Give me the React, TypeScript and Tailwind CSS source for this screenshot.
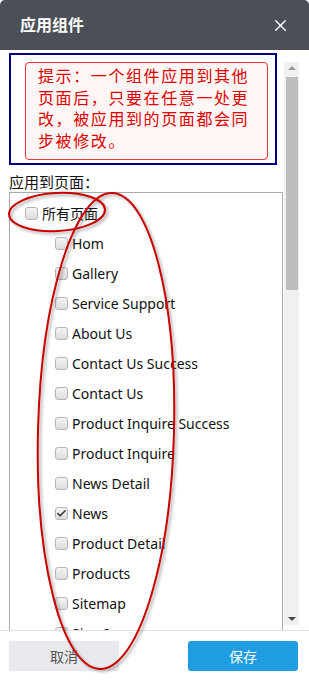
import { Check, X } from "lucide-react";

const pages = [
  { name: "Hom" },
  { name: "Gallery" },
  { name: "Service Support" },
  { name: "About Us" },
  { name: "Contact Us Success" },
  { name: "Contact Us" },
  { name: "Product Inquire Success" },
  { name: "Product Inquire" },
  { name: "News Detail" },
  { name: "News", checked: true },
  { name: "Product Detail" },
  { name: "Products" },
  { name: "Sitemap" },
  { name: "Sign In" },
];

function Box({ checked }: { checked?: boolean }) {
  return (
    <span className="flex h-[13px] w-[13px] shrink-0 items-center justify-center rounded-[3px] border border-[#b5b5b5] bg-gradient-to-b from-[#f4f4f4] to-[#dcdcdc]">
      {checked && <Check size={11} strokeWidth={3.5} className="text-[#333]" />}
    </span>
  );
}

export default function App() {
  return (
    <div className="relative h-[683px] w-[309px] overflow-hidden rounded-[5px] bg-white font-['Noto_Sans','Noto_Sans_CJK_SC',sans-serif]">
      <div className="flex h-[50px] items-center justify-between bg-[#4b4f57] pl-[20px] pr-[19px]">
        <span className="text-[16px] font-bold text-white">应用组件</span>
        <X size={19} strokeWidth={1.8} className="text-white" />
      </div>

      <div className="flex h-[580px] overflow-hidden">
        <div className="w-[283px] shrink-0 overflow-hidden pl-[9px] pt-[3px]">
          <div className="w-[268px] border-2 border-[#00007f] pb-[3px] pl-[14px] pt-[7px]">
            <div className="w-[243px] rounded-[4px] border border-[#e33] bg-[#fff6f5] pb-[8px] pl-[12px] pr-[14px] pt-[2px] font-['Noto_Sans_CJK_SC',sans-serif] text-[16px] leading-[21.5px] tracking-[1.6px] text-[#e00000]">
              提示：一个组件应用到其他页面后，只要在任意一处更改，被应用到的页面都会同步被修改。
            </div>
          </div>
          <div className="mt-[7px] font-['Noto_Sans_CJK_SC',sans-serif] text-[15px] leading-[20px] text-[#111]">
            应用到页面：
          </div>
          <div className="h-[600px] w-[274px] border border-[#aaa] pl-[15px] pt-[5px]">
            <div className="flex h-[30px] items-center gap-[4px]">
              <Box />
              <span className="font-['Noto_Sans_CJK_SC',sans-serif] text-[14px] text-[#111]">所有页面</span>
            </div>
            {pages.map((p, i) => (
              <div key={i} className="flex h-[30px] items-center gap-[4px] pl-[30px]">
                <Box checked={p.checked} />
                <span className="text-[14px] text-[#111]">{p.name}</span>
              </div>
            ))}
          </div>
        </div>
        <div className="ml-[1px] mt-[12px] flex h-[563px] w-[15px] flex-col items-center bg-[#f0f0f0]">
          <div className="flex h-[12px] w-full items-center justify-center">
            <span className="h-0 w-0 border-x-[4px] border-b-[4px] border-x-transparent border-b-[#999]" />
          </div>
          <div className="mt-[3px] h-[213px] w-[12px] bg-[#bdbdbd]" />
          <div className="flex-1" />
          <div className="flex h-[12px] w-full items-center justify-center">
            <span className="h-0 w-0 border-x-[4px] border-t-[4px] border-x-transparent border-t-[#444]" />
          </div>
        </div>
      </div>

      <div className="flex h-[53px] justify-between border-t border-[#e2e2e2] pl-[9px] pr-[11px] pt-[10px]">
        <button className="h-[30px] w-[110px] rounded-[3px] bg-[#e9eaed] font-['Noto_Sans_CJK_SC',sans-serif] text-[14px] text-[#555]">
          取消
        </button>
        <button className="h-[30px] w-[110px] rounded-[3px] bg-[#1f9de0] font-['Noto_Sans_CJK_SC',sans-serif] text-[14px] text-white">
          保存
        </button>
      </div>

      <svg className="pointer-events-none absolute left-0 top-0" width="309" height="683">
        <defs>
          <filter id="sh" x="-20%" y="-20%" width="140%" height="140%">
            <feDropShadow dx="2" dy="2" stdDeviation="1.5" floodColor="#000" floodOpacity="0.35" />
          </filter>
        </defs>
        <g filter="url(#sh)" fill="none" stroke="#c80000" strokeWidth="2">
          <ellipse cx="57" cy="212" rx="48" ry="19" transform="rotate(-3 57 212)" />
          <ellipse cx="106" cy="431" rx="68" ry="238" transform="rotate(1.5 106 431)" />
        </g>
      </svg>
    </div>
  );
}
